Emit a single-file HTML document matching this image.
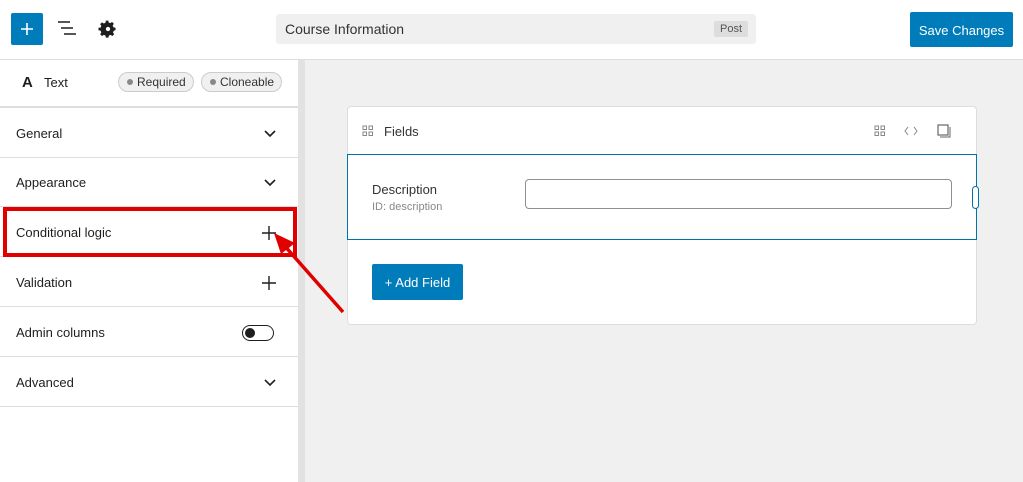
<!DOCTYPE html>
<html><head><style>
body{margin:0;width:1023px;height:482px;overflow:hidden;font-family:"Liberation Sans",sans-serif;background:#f0f0f0;position:relative;color:#1e1e1e}
.hdr{position:absolute;left:0;top:0;width:1023px;height:59px;background:#fff;border-bottom:1px solid #ddd}
.side{position:absolute;left:0;top:60px;width:298px;height:422px;background:#fff}
.gut{position:absolute;left:298px;top:60px;width:7px;height:422px;background:#e2e2e2}
.row{position:absolute;left:0;width:298px;height:49px;border-bottom:1px solid #ddd;font-size:13px;line-height:51px;color:#1e1e1e}
.row span{position:absolute;left:16px}
.ic{position:absolute;right:22px;top:0}
.pill{position:absolute;top:12px;height:18px;border:1px solid #ccc;border-radius:10px;background:#f0f0f0;font-size:12px;line-height:18px;color:#333;padding:0 7px 0 18px}
.pill:before{content:"";position:absolute;left:8px;top:6px;width:6px;height:6px;border-radius:50%;background:#888}
</style></head><body>
<div class="hdr">
<div style="position:absolute;left:11px;top:13px;width:32px;height:32px;background:#007cba;border-radius:2px"><svg style="position:absolute;left:10px;top:10px" width="12" height="12"><path d="M6 0v12M0 6h12" stroke="#fff" stroke-width="1.6"/></svg></div>
<svg style="position:absolute;left:57px;top:20px" width="20" height="18"><path d="M1 2h12M4 8h12M7 14h12" stroke="#1e1e1e" stroke-width="1.6"/></svg>
<svg style="position:absolute;left:97px;top:19px" width="20" height="20" viewBox="0 0 24 24"><path fill="#1e1e1e" d="M12 8a4 4 0 1 0 0 8 4 4 0 0 0 0-8zm9 5.5v-3l-2.6-.6a7 7 0 0 0-.8-1.9l1.4-2.3-2.1-2.1-2.3 1.4a7 7 0 0 0-1.9-.8L12.5 2h-3l-.6 2.6a7 7 0 0 0-1.9.8L4.7 4l-2.1 2.1L4 8.4a7 7 0 0 0-.8 1.9L.6 10.5v3l2.6.6c.2.7.4 1.3.8 1.9l-1.4 2.3 2.1 2.1 2.3-1.4c.6.4 1.2.6 1.9.8l.6 2.6h3l.6-2.6c.7-.2 1.3-.4 1.9-.8l2.3 1.4 2.1-2.1-1.4-2.3c.4-.6.6-1.2.8-1.9z" transform="translate(1.2 0)"/><circle cx="13.2" cy="12" r="2.6" fill="#fff"/></svg>
<div style="position:absolute;left:276px;top:14px;width:480px;height:30px;background:#f0f0f0;border-radius:3px;font-size:14px;line-height:30px;color:#333"><span style="margin-left:9px">Course Information</span><span style="position:absolute;right:8px;top:7px;height:16px;line-height:16px;font-size:11px;background:#ddd;padding:0 6px;border-radius:2px;color:#555">Post</span></div>
<div style="position:absolute;left:910px;top:12px;width:103px;height:35px;background:#007cba;border-radius:2px;color:#fff;font-size:13px;line-height:37px;text-align:center">Save Changes</div>
</div>
<div class="side">
<div class="row" style="top:0;height:46px;line-height:46px"><span style="left:22px;font-weight:bold;font-size:15px">A</span><span style="left:44px">Text</span>
<div class="pill" style="left:118px">Required</div><div class="pill" style="left:201px">Cloneable</div></div>
<div class="row" style="top:47px;border-top:1px solid #ddd;height:49px"><span>General</span><svg class="ic" style="top:22px" width="12" height="8"><path d="M1 1l5 5 5-5" stroke="#1e1e1e" stroke-width="1.6" fill="none"/></svg></div>
<div class="row" style="top:97px"><span>Appearance</span><svg class="ic" style="top:22px" width="12" height="8"><path d="M1 1l5 5 5-5" stroke="#1e1e1e" stroke-width="1.6" fill="none"/></svg></div>
<div class="row" style="top:147px"><span>Conditional logic</span><svg class="ic" style="top:19px" width="14" height="14"><path d="M7 0v14M0 7h14" stroke="#1e1e1e" stroke-width="1.4"/></svg></div>
<div class="row" style="top:197px"><span>Validation</span><svg class="ic" style="top:19px" width="14" height="14"><path d="M7 0v14M0 7h14" stroke="#1e1e1e" stroke-width="1.4"/></svg></div>
<div class="row" style="top:247px"><span>Admin columns</span><div style="position:absolute;left:242px;top:18px;width:30px;height:14px;border:1px solid #1e1e1e;border-radius:8px"><div style="position:absolute;left:2px;top:2px;width:10px;height:10px;border-radius:50%;background:#1e1e1e"></div></div></div>
<div class="row" style="top:297px"><span>Advanced</span><svg class="ic" style="top:22px" width="12" height="8"><path d="M1 1l5 5 5-5" stroke="#1e1e1e" stroke-width="1.6" fill="none"/></svg></div>
</div>
<div class="gut"></div>
<div style="position:absolute;left:347px;top:106px;width:628px;height:217px;background:#fff;border:1px solid #ddd;border-radius:4px">
<svg style="position:absolute;left:14px;top:18px" width="12" height="12"><g fill="none" stroke="#888"><rect x="1" y="1" width="3.5" height="3.5"/><rect x="7" y="1" width="3.5" height="3.5"/><rect x="1" y="7" width="3.5" height="3.5"/><rect x="7" y="7" width="3.5" height="3.5"/></g></svg>
<div style="position:absolute;left:36px;top:17px;font-size:13px;color:#333">Fields</div>
<svg style="position:absolute;left:526px;top:18px" width="12" height="12"><g fill="none" stroke="#888"><rect x="1" y="1" width="3.5" height="3.5"/><rect x="7" y="1" width="3.5" height="3.5"/><rect x="1" y="7" width="3.5" height="3.5"/><rect x="7" y="7" width="3.5" height="3.5"/></g></svg>
<svg style="position:absolute;left:556px;top:18px" width="14" height="12"><path d="M4 2L1 6l3 4M10 2l3 4-3 4" stroke="#888" fill="none"/></svg>
<svg style="position:absolute;left:589px;top:17px" width="14" height="14"><rect x="1" y="1" width="10" height="10" fill="none" stroke="#666" stroke-width="1.2"/><path d="M3 13h10V3" stroke="#666" fill="none"/></svg>
<div style="position:absolute;left:-1px;top:47px;width:628px;height:84px;border:1px solid #0073aa"></div>
<div style="position:absolute;left:24px;top:75px;font-size:13px;color:#333">Description</div>
<div style="position:absolute;left:24px;top:94px;font-size:11px;color:#888">ID: description</div>
<div style="position:absolute;left:177px;top:72px;width:425px;height:28px;border:1px solid #8c8f94;border-radius:4px"></div>
<div style="position:absolute;left:624px;top:79px;width:5px;height:21px;border:1px solid #0073aa;border-radius:4px;background:#fff"></div>
<div style="position:absolute;left:24px;top:157px;width:91px;height:36px;background:#007cba;border-radius:2px;color:#fff;font-size:13px;line-height:38px;text-align:center">+ Add Field</div>
</div>
<div style="position:absolute;left:3px;top:207px;width:286px;height:42px;border:4px solid #e00000"></div>
<svg style="position:absolute;left:0;top:0" width="1023" height="482"><line x1="343" y1="312" x2="283" y2="244" stroke="#e00000" stroke-width="3.5"/><polygon points="274,233 295,243 281,254" fill="#e00000"/></svg>
</body></html>
